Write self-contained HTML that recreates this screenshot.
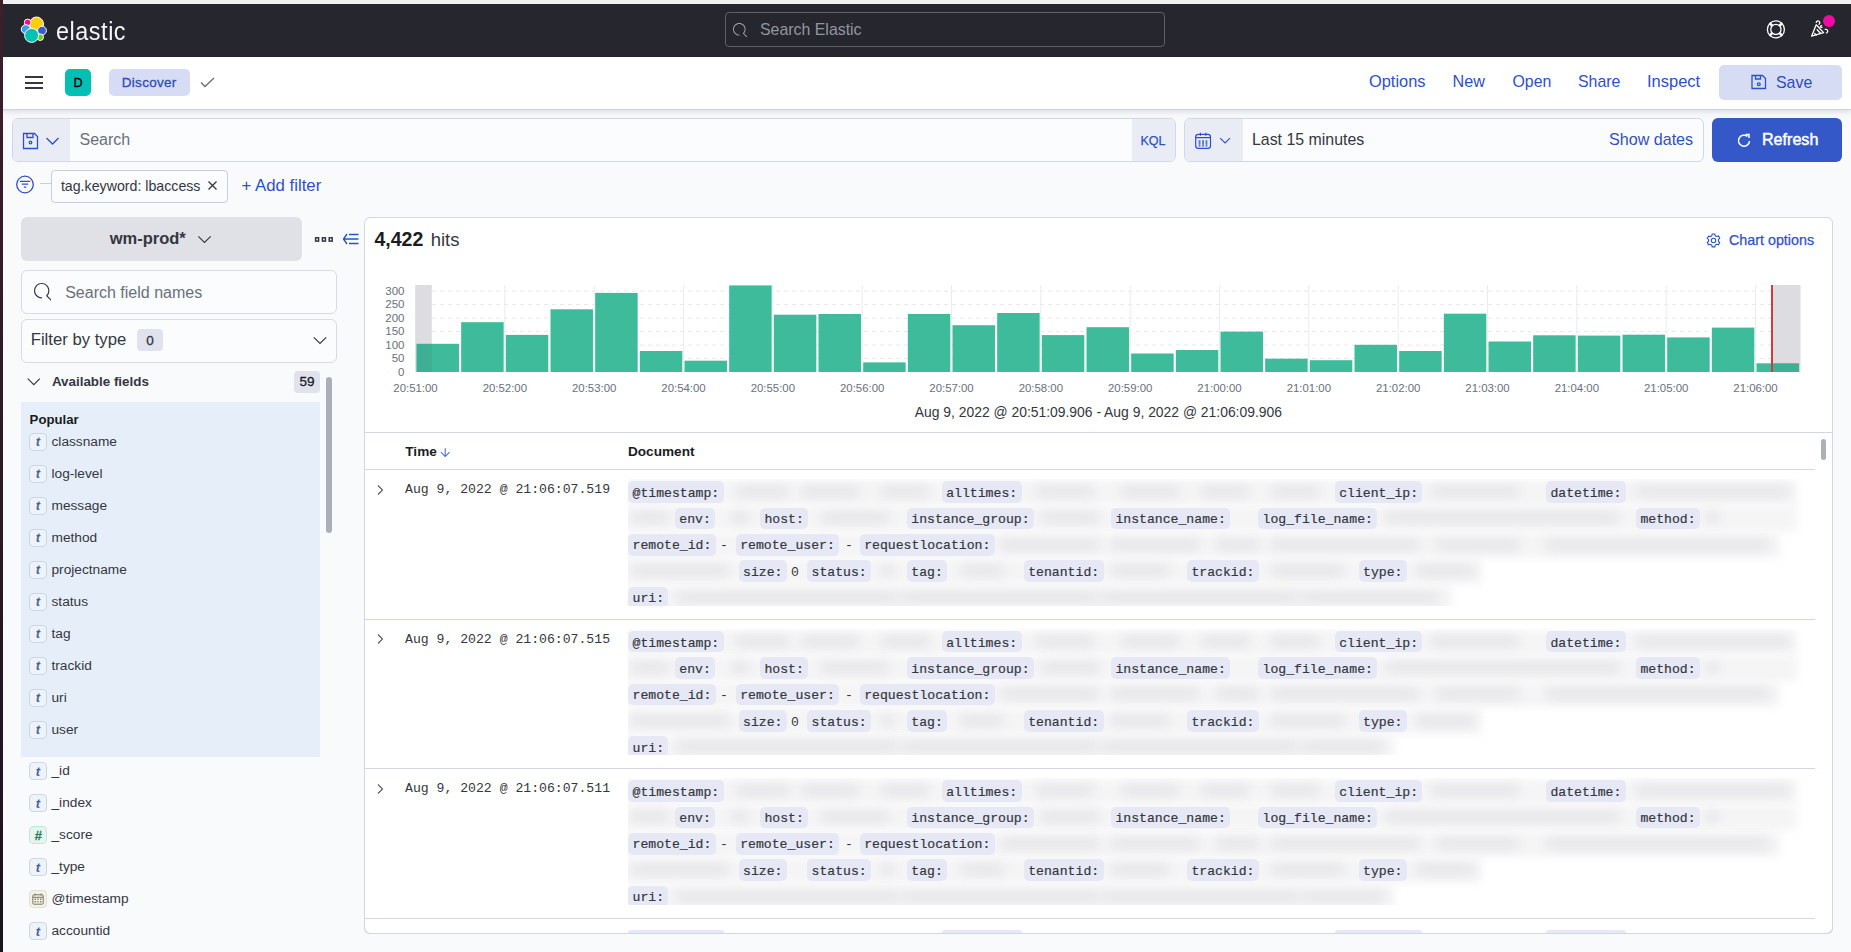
<!DOCTYPE html>
<html><head><meta charset="utf-8">
<style>
*{box-sizing:border-box;margin:0;padding:0}
html,body{width:1851px;height:952px;overflow:hidden}
body{position:relative;background:#f9fafc;font-family:"Liberation Sans",sans-serif;color:#343741}
.a{position:absolute}
.t{position:absolute;white-space:nowrap;line-height:1}
svg{display:block}
</style></head><body>
<div class="a" style="left:0;top:0;width:1851px;height:4px;background:#f1f1f2"></div>
<div class="a" style="left:0;top:0;width:3px;height:952px;background:linear-gradient(#3e1f2b,#1b1320);z-index:50"></div>
<div class="a" style="left:3px;top:4px;width:1848px;height:53px;background:#25262e"></div>
<svg class="a" style="left:18px;top:14px" width="32" height="32" viewBox="18 14 32 32">
  <g stroke="#fff" stroke-width="1">
  <circle cx="36.5" cy="24" r="7" fill="#fcd000"/>
  <circle cx="27.6" cy="22.4" r="3.3" fill="#ee0e8c"/>
  <circle cx="25.8" cy="29.2" r="4.5" fill="#3a9df0"/>
  <circle cx="42" cy="30.6" r="4.4" fill="#3a5bd0"/>
  <circle cx="40.2" cy="37.2" r="3.3" fill="#67d200"/>
  <circle cx="31.6" cy="35.4" r="7" fill="#00c2b2"/>
  </g>
</svg>
<div class="t" style="left:56.40px;top:18px;font-size:26px;font-family:'Liberation Sans',sans-serif;color:#f4f4f6;letter-spacing:0.6px;transform:scaleX(0.9);transform-origin:0 0">elastic</div><div class="a" style="left:725px;top:12px;width:440px;height:35px;border:1px solid #5f6168;border-radius:4px;background:#25262e"></div>
<svg class="a" style="left:733px;top:22.5px" width="14.4" height="14.4" viewBox="0 0 16 16"><path d="M11.271 11.978l3.872 3.873a.502.502 0 00.708 0 .502.502 0 000-.708l-3.565-3.564c2.38-2.747 2.267-6.923-.342-9.532-2.73-2.73-7.17-2.73-9.898 0-2.728 2.729-2.728 7.17 0 9.9a6.955 6.955 0 004.949 2.05.5.5 0 000-1 5.96 5.96 0 01-4.242-1.757 6.01 6.01 0 010-8.486c2.337-2.34 6.143-2.34 8.484 0a6.01 6.01 0 010 8.486.5.5 0 00.034.738z" fill="#a2a5ad"/></svg>
<div class="t" style="left:760.00px;top:22px;font-size:15.9px;font-family:'Liberation Sans',sans-serif;color:#93969e;">Search Elastic</div><svg class="a" style="left:1750px;top:5px" width="100" height="50" viewBox="1750 5 100 50"><g fill="none" stroke="#fff"><circle cx="1775.9" cy="29.4" r="8.5" stroke-width="1.3"/><circle cx="1775.9" cy="29.4" r="5.1" stroke-width="1.3"/><path d="M1772.1 25.6l-2.6-2.6M1779.7 25.6l2.6-2.6M1772.1 33.2l-2.6 2.6M1779.7 33.2l2.6 2.6" stroke-width="2.6"/></g>
<g fill="none" stroke="#fff" stroke-width="1.3" stroke-linejoin="round" stroke-linecap="round"><path d="M1811.6 36.2L1816.2 24.8L1823.6 32.6Z"/><path d="M1817.2 29.8l3.2 3.4M1814.6 33.4l1.6 1.6"/><path d="M1816.2 22.4a1.8 1.8 0 1 1 2.8 1.8M1825.2 29.4a1.8 1.8 0 1 1 1.2 3.6"/><path d="M1821.6 25.6l-1.4 1.2 1.8.6"/></g></svg>
<div class="a" style="left:1822.9px;top:14.8px;width:12px;height:12px;border-radius:50%;background:#f00ba6"></div>
<div class="a" style="left:3px;top:57px;width:1848px;height:53px;background:#fff;border-bottom:1px solid #cdd3df;box-shadow:0 2px 3px rgba(40,50,70,.08),0 4px 7px rgba(40,50,70,.05)"></div>
<div class="a" style="left:25px;top:76px;width:18px;height:2px;background:#343741"></div>
<div class="a" style="left:25px;top:82px;width:18px;height:2px;background:#343741"></div>
<div class="a" style="left:25px;top:87px;width:18px;height:2px;background:#343741"></div>
<div class="a" style="left:65px;top:69px;width:26px;height:27px;border-radius:5px;background:#00bfb3"></div>
<div class="a" style="left:109px;top:69px;width:81px;height:27px;border-radius:5px;background:#d6dcf3"></div>
<svg class="a" style="left:199px;top:76px" width="17" height="13" viewBox="0 0 17 13"><path d="M2 6.5l4 4 9-8.5" fill="none" stroke="#6a6e7a" stroke-width="1.3"/></svg>
<div class="t" style="left:65.00px;width:26px;text-align:center;top:77px;font-size:12.6px;font-family:'Liberation Sans',sans-serif;color:#000;-webkit-text-stroke:0.35px #000">D</div><div class="t" style="left:121.80px;top:76px;font-size:13.5px;font-family:'Liberation Sans',sans-serif;color:#2f4daf;letter-spacing:0.28px;-webkit-text-stroke:0.3px #2f4daf">Discover</div><div class="t" style="left:1369.00px;top:73px;font-size:16.4px;font-family:'Liberation Sans',sans-serif;color:#3050c6;">Options</div><div class="t" style="left:1452.60px;top:73px;font-size:16.2px;font-family:'Liberation Sans',sans-serif;color:#3050c6;">New</div><div class="t" style="left:1512.50px;top:74px;font-size:15.9px;font-family:'Liberation Sans',sans-serif;color:#3050c6;">Open</div><div class="t" style="left:1578.00px;top:74px;font-size:15.9px;font-family:'Liberation Sans',sans-serif;color:#3050c6;">Share</div><div class="t" style="left:1647.00px;top:73px;font-size:16.5px;font-family:'Liberation Sans',sans-serif;color:#3050c6;">Inspect</div><div class="a" style="left:1719px;top:65px;width:123px;height:35px;border-radius:5px;background:#d6dcf3"></div>
<svg class="a" style="left:1750px;top:73px" width="18" height="18" viewBox="0 0 18 18"><g fill="none" stroke="#3050c6" stroke-width="1.3"><path d="M2 2.5h10.5l3 3v10H2z"/><path d="M5.5 2.5v3.5h5v-3.5"/><circle cx="8.8" cy="11.3" r="1.4"/></g></svg>
<div class="t" style="left:1776.00px;top:75px;font-size:15.9px;font-family:'Liberation Sans',sans-serif;color:#2c4cb8;">Save</div><div class="a" style="left:12px;top:118px;width:1164px;height:44px;border:1px solid #d2d6e6;border-radius:6px;background:#fbfcfd;overflow:hidden">
  <div class="a" style="left:0;top:0;width:57px;height:42px;background:#e9ebf5"></div>
  <div class="a" style="left:1119px;top:0;width:44px;height:42px;background:#e9ebf5"></div>
</div>
<svg class="a" style="left:22px;top:132px" width="18" height="18" viewBox="0 0 18 18"><g fill="none" stroke="#3050c6" stroke-width="1.3"><path d="M1.5 1.5h11l3 3v12h-14z"/><path d="M5 1.5v4h6v-4"/><circle cx="8.5" cy="10.5" r="1.3"/></g></svg>
<svg class="a" style="left:45px;top:136px" width="15" height="10" viewBox="0 0 15 10"><path d="M1.5 2l6 6 6-6" fill="none" stroke="#3050c6" stroke-width="1.3"/></svg>
<div class="a" style="left:1184px;top:118px;width:520px;height:44px;border:1px solid #d2d6e6;border-radius:6px;background:#fbfcfd;overflow:hidden">
  <div class="a" style="left:0;top:0;width:58px;height:42px;background:#e9ebf5"></div>
</div>
<svg class="a" style="left:1186px;top:125px" width="54" height="30" viewBox="1186 125 54 30"><g fill="none" stroke="#3050c6" stroke-width="1.2"><rect x="1195.7" y="134.4" width="14.8" height="14" rx="2.6"/><path d="M1195.7 137.6h14.8M1200.4 132.8v3M1205.8 132.8v3"/><path d="M1220.2 138.2l4.9 4.8 4.9-4.8" stroke-width="1.15"/></g><g fill="#3050c6"><rect x="1198.6" y="140.2" width="1.9" height="4.6" opacity=".75"/><rect x="1202.1" y="140.2" width="1.9" height="4.6" opacity=".75"/><rect x="1205.5" y="140.2" width="1.9" height="4.6" opacity=".75"/><rect x="1198.6" y="145.3" width="1.9" height="1.2"/><rect x="1202.1" y="145.3" width="1.9" height="1.2"/><rect x="1205.5" y="145.3" width="1.9" height="1.2"/></g></svg>
<div class="a" style="left:1712px;top:118px;width:130px;height:44px;border-radius:6px;background:#3558c9"></div>
<svg class="a" style="left:1736px;top:132px" width="17" height="17" viewBox="0 0 17 17"><path d="M13.5 9a5.5 5.5 0 1 1-2-4.6" fill="none" stroke="#fff" stroke-width="1.5"/><path d="M9.5 2.5h3.5v3.6" fill="none" stroke="#fff" stroke-width="1.5"/></svg>
<div class="t" style="left:79.50px;top:132px;font-size:16px;font-family:'Liberation Sans',sans-serif;color:#69707d;">Search</div><div class="t" style="left:1140.40px;top:135px;font-size:12.5px;font-family:'Liberation Sans',sans-serif;color:#3050c6;-webkit-text-stroke:0.25px #3050c6">KQL</div><div class="t" style="left:1252.00px;top:132px;font-size:15.9px;font-family:'Liberation Sans',sans-serif;color:#343741;">Last 15 minutes</div><div class="t" style="left:1609.00px;top:131px;font-size:16.1px;font-family:'Liberation Sans',sans-serif;color:#3050c6;">Show dates</div><div class="t" style="left:1762.00px;top:131px;font-size:16.1px;font-family:'Liberation Sans',sans-serif;color:#fff;-webkit-text-stroke:0.45px #fff">Refresh</div><svg class="a" style="left:15px;top:175px" width="20" height="20" viewBox="0 0 20 20"><g fill="none" stroke="#3050c6" stroke-width="1.3"><circle cx="10" cy="9.5" r="8.3"/><path d="M4.8 6.3h10.4M6.8 9.2h6.4M8.8 12.1h2.4"/></g></svg>
<div class="a" style="left:40px;top:183px;width:11px;height:1px;background:#c9cde0"></div>
<div class="a" style="left:51px;top:170px;width:177px;height:33px;border:1px solid #c9cde0;border-radius:4px;background:#fbfcfd"></div>
<svg class="a" style="left:206px;top:179px" width="13" height="13" viewBox="0 0 13 13"><path d="M2.5 2.5l8 8M10.5 2.5l-8 8" stroke="#343741" stroke-width="1.3"/></svg>
<div class="t" style="left:60.90px;top:179px;font-size:14.2px;font-family:'Liberation Sans',sans-serif;color:#343741;">tag.keyword: lbaccess</div><div class="t" style="left:241.50px;top:178px;font-size:16.8px;font-family:'Liberation Sans',sans-serif;color:#3050c6;">+ Add filter</div>
<div class="a" style="left:21px;top:217px;width:281px;height:44px;border-radius:6px;background:#e0e1e6"></div>
<svg class="a" style="left:196px;top:233px" width="17" height="12" viewBox="0 0 17 12"><path d="M2.3 3.3l6.2 6.2 6.2-6.2" fill="none" stroke="#343741" stroke-width="1.15"/></svg>
<svg class="a" style="left:314px;top:236px" width="20" height="7" viewBox="0 0 20 7"><g fill="none" stroke="#343741" stroke-width="1.5"><rect x="1.6" y="1.8" width="3" height="3.3"/><rect x="8.4" y="1.8" width="3" height="3.3"/><rect x="15.2" y="1.8" width="3" height="3.3"/></g></svg>
<svg class="a" style="left:342px;top:232px" width="17" height="14" viewBox="0 0 17 14"><g fill="none" stroke="#3050c6" stroke-width="1.4"><path d="M5 2L1.5 7 5 12M1.5 7h15M7 2.5h9.5M7 11.5h9.5"/></g></svg>
<div class="a" style="left:21px;top:270px;width:316px;height:44px;border:1px solid #d8d9ec;border-radius:6px;background:#fbfcfd"></div>
<svg class="a" style="left:33.8px;top:283px" width="17.6" height="17.6" viewBox="0 0 16 16"><path d="M11.271 11.978l3.872 3.873a.502.502 0 00.708 0 .502.502 0 000-.708l-3.565-3.564c2.38-2.747 2.267-6.923-.342-9.532-2.73-2.73-7.17-2.73-9.898 0-2.728 2.729-2.728 7.17 0 9.9a6.955 6.955 0 004.949 2.05.5.5 0 000-1 5.96 5.96 0 01-4.242-1.757 6.01 6.01 0 010-8.486c2.337-2.34 6.143-2.34 8.484 0a6.01 6.01 0 010 8.486.5.5 0 00.034.738z" fill="#343741"/></svg>
<div class="a" style="left:21px;top:319px;width:316px;height:44px;border:1px solid #d8d9ec;border-radius:6px;background:#fbfcfd"></div>
<div class="a" style="left:137px;top:329px;width:26px;height:22px;border-radius:4px;background:#e0e2ec"></div>
<svg class="a" style="left:312px;top:335px" width="16" height="11" viewBox="0 0 16 11"><path d="M1.8 2.3l6.2 6.2 6.2-6.2" fill="none" stroke="#343741" stroke-width="1.15"/></svg>
<svg class="a" style="left:26px;top:376px" width="16" height="11" viewBox="0 0 16 11"><path d="M1.8 2.6l6 6 6-6" fill="none" stroke="#343741" stroke-width="1.15"/></svg>
<div class="a" style="left:294px;top:371px;width:26px;height:22px;border-radius:4px;background:#e0e2ec"></div>
<div class="a" style="left:326px;top:377px;width:6px;height:156px;border-radius:3px;background:#abafb8"></div>
<div class="a" style="left:21px;top:402px;width:299px;height:355px;background:#e6eff9"></div>
<div class="t" style="left:109.70px;top:230px;font-size:16.5px;font-family:'Liberation Sans',sans-serif;color:#343741;font-weight:bold;">wm-prod*</div><div class="t" style="left:65.20px;top:285px;font-size:16px;font-family:'Liberation Sans',sans-serif;color:#69707d;">Search field names</div><div class="t" style="left:30.70px;top:332px;font-size:16.7px;font-family:'Liberation Sans',sans-serif;color:#343741;">Filter by type</div><div class="t" style="left:137.00px;width:26px;text-align:center;top:334px;font-size:13.5px;font-family:'Liberation Sans',sans-serif;color:#343741;-webkit-text-stroke:0.3px #343741">0</div><div class="t" style="left:51.90px;top:375px;font-size:13.4px;font-family:'Liberation Sans',sans-serif;color:#343741;font-weight:bold;">Available fields</div><div class="t" style="left:294.00px;width:26px;text-align:center;top:375px;font-size:13.5px;font-family:'Liberation Sans',sans-serif;color:#1a1c21;-webkit-text-stroke:0.3px #1a1c21">59</div><div class="t" style="left:29.60px;top:413px;font-size:13.2px;font-family:'Liberation Sans',sans-serif;color:#1a1c21;font-weight:bold;">Popular</div><div class="a" style="left:29px;top:433px;width:18px;height:18px;border:1px solid #cdd6e8;border-radius:4px;background:#eef3fa"></div><div class="t" style="left:29.00px;width:18px;text-align:center;top:435px;font-size:13px;font-family:'Liberation Sans',sans-serif;color:#44659b;font-weight:bold;font-style:italic">t</div><div class="t" style="left:51.50px;top:435px;font-size:13.7px;font-family:'Liberation Sans',sans-serif;color:#343741;">classname</div>
<div class="a" style="left:29px;top:465px;width:18px;height:18px;border:1px solid #cdd6e8;border-radius:4px;background:#eef3fa"></div><div class="t" style="left:29.00px;width:18px;text-align:center;top:467px;font-size:13px;font-family:'Liberation Sans',sans-serif;color:#44659b;font-weight:bold;font-style:italic">t</div><div class="t" style="left:51.50px;top:467px;font-size:13.7px;font-family:'Liberation Sans',sans-serif;color:#343741;">log-level</div>
<div class="a" style="left:29px;top:497px;width:18px;height:18px;border:1px solid #cdd6e8;border-radius:4px;background:#eef3fa"></div><div class="t" style="left:29.00px;width:18px;text-align:center;top:499px;font-size:13px;font-family:'Liberation Sans',sans-serif;color:#44659b;font-weight:bold;font-style:italic">t</div><div class="t" style="left:51.50px;top:499px;font-size:13.7px;font-family:'Liberation Sans',sans-serif;color:#343741;">message</div>
<div class="a" style="left:29px;top:529px;width:18px;height:18px;border:1px solid #cdd6e8;border-radius:4px;background:#eef3fa"></div><div class="t" style="left:29.00px;width:18px;text-align:center;top:531px;font-size:13px;font-family:'Liberation Sans',sans-serif;color:#44659b;font-weight:bold;font-style:italic">t</div><div class="t" style="left:51.50px;top:531px;font-size:13.7px;font-family:'Liberation Sans',sans-serif;color:#343741;">method</div>
<div class="a" style="left:29px;top:561px;width:18px;height:18px;border:1px solid #cdd6e8;border-radius:4px;background:#eef3fa"></div><div class="t" style="left:29.00px;width:18px;text-align:center;top:563px;font-size:13px;font-family:'Liberation Sans',sans-serif;color:#44659b;font-weight:bold;font-style:italic">t</div><div class="t" style="left:51.50px;top:563px;font-size:13.7px;font-family:'Liberation Sans',sans-serif;color:#343741;">projectname</div>
<div class="a" style="left:29px;top:593px;width:18px;height:18px;border:1px solid #cdd6e8;border-radius:4px;background:#eef3fa"></div><div class="t" style="left:29.00px;width:18px;text-align:center;top:595px;font-size:13px;font-family:'Liberation Sans',sans-serif;color:#44659b;font-weight:bold;font-style:italic">t</div><div class="t" style="left:51.50px;top:595px;font-size:13.7px;font-family:'Liberation Sans',sans-serif;color:#343741;">status</div>
<div class="a" style="left:29px;top:625px;width:18px;height:18px;border:1px solid #cdd6e8;border-radius:4px;background:#eef3fa"></div><div class="t" style="left:29.00px;width:18px;text-align:center;top:627px;font-size:13px;font-family:'Liberation Sans',sans-serif;color:#44659b;font-weight:bold;font-style:italic">t</div><div class="t" style="left:51.50px;top:627px;font-size:13.7px;font-family:'Liberation Sans',sans-serif;color:#343741;">tag</div>
<div class="a" style="left:29px;top:657px;width:18px;height:18px;border:1px solid #cdd6e8;border-radius:4px;background:#eef3fa"></div><div class="t" style="left:29.00px;width:18px;text-align:center;top:659px;font-size:13px;font-family:'Liberation Sans',sans-serif;color:#44659b;font-weight:bold;font-style:italic">t</div><div class="t" style="left:51.50px;top:659px;font-size:13.7px;font-family:'Liberation Sans',sans-serif;color:#343741;">trackid</div>
<div class="a" style="left:29px;top:689px;width:18px;height:18px;border:1px solid #cdd6e8;border-radius:4px;background:#eef3fa"></div><div class="t" style="left:29.00px;width:18px;text-align:center;top:691px;font-size:13px;font-family:'Liberation Sans',sans-serif;color:#44659b;font-weight:bold;font-style:italic">t</div><div class="t" style="left:51.50px;top:691px;font-size:13.7px;font-family:'Liberation Sans',sans-serif;color:#343741;">uri</div>
<div class="a" style="left:29px;top:721px;width:18px;height:18px;border:1px solid #cdd6e8;border-radius:4px;background:#eef3fa"></div><div class="t" style="left:29.00px;width:18px;text-align:center;top:723px;font-size:13px;font-family:'Liberation Sans',sans-serif;color:#44659b;font-weight:bold;font-style:italic">t</div><div class="t" style="left:51.50px;top:723px;font-size:13.7px;font-family:'Liberation Sans',sans-serif;color:#343741;">user</div>
<div class="a" style="left:29px;top:762px;width:18px;height:18px;border:1px solid #cdd6e8;border-radius:4px;background:#eef3fa"></div><div class="t" style="left:29.00px;width:18px;text-align:center;top:765px;font-size:13px;font-family:'Liberation Sans',sans-serif;color:#44659b;font-weight:bold;font-style:italic">t</div><div class="t" style="left:51.50px;top:764px;font-size:13.7px;font-family:'Liberation Sans',sans-serif;color:#343741;">_id</div>
<div class="a" style="left:29px;top:794px;width:18px;height:18px;border:1px solid #cdd6e8;border-radius:4px;background:#eef3fa"></div><div class="t" style="left:29.00px;width:18px;text-align:center;top:797px;font-size:13px;font-family:'Liberation Sans',sans-serif;color:#44659b;font-weight:bold;font-style:italic">t</div><div class="t" style="left:51.50px;top:796px;font-size:13.7px;font-family:'Liberation Sans',sans-serif;color:#343741;">_index</div>
<div class="a" style="left:29px;top:826px;width:18px;height:18px;border:1px solid #c5e6d9;border-radius:4px;background:#e6f5ef"></div><div class="t" style="left:29.00px;width:18px;text-align:center;top:829px;font-size:13px;font-family:'Liberation Sans',sans-serif;color:#2f7d60;font-weight:bold;font-style:italic;-webkit-text-stroke:0.3px #2f7d60">#</div><div class="t" style="left:51.50px;top:828px;font-size:13.7px;font-family:'Liberation Sans',sans-serif;color:#343741;">_score</div>
<div class="a" style="left:29px;top:858px;width:18px;height:18px;border:1px solid #cdd6e8;border-radius:4px;background:#eef3fa"></div><div class="t" style="left:29.00px;width:18px;text-align:center;top:861px;font-size:13px;font-family:'Liberation Sans',sans-serif;color:#44659b;font-weight:bold;font-style:italic">t</div><div class="t" style="left:51.50px;top:860px;font-size:13.7px;font-family:'Liberation Sans',sans-serif;color:#343741;">_type</div>
<div class="a" style="left:29px;top:890px;width:18px;height:18px;border:1px solid #e3e0cf;border-radius:4px;background:#f3f1e8"></div><svg class="a" style="left:32px;top:893px" width="12" height="12" viewBox="0 0 12 12"><g fill="none" stroke="#7d7a66" stroke-width="1"><rect x="0.8" y="1.8" width="10.4" height="9.4" rx="1"/><path d="M0.8 4.3h10.4M3 0.5v2M9 0.5v2"/></g><g fill="#7d7a66"><rect x="2.5" y="5.5" width="1.3" height="1.5"/><rect x="5.3" y="5.5" width="1.3" height="1.5"/><rect x="8.1" y="5.5" width="1.3" height="1.5"/><rect x="2.5" y="8" width="1.3" height="1.5"/><rect x="5.3" y="8" width="1.3" height="1.5"/><rect x="8.1" y="8" width="1.3" height="1.5"/></g></svg><div class="t" style="left:51.50px;top:892px;font-size:13.7px;font-family:'Liberation Sans',sans-serif;color:#343741;">@timestamp</div>
<div class="a" style="left:29px;top:922px;width:18px;height:18px;border:1px solid #cdd6e8;border-radius:4px;background:#eef3fa"></div><div class="t" style="left:29.00px;width:18px;text-align:center;top:925px;font-size:13px;font-family:'Liberation Sans',sans-serif;color:#44659b;font-weight:bold;font-style:italic">t</div><div class="t" style="left:51.50px;top:924px;font-size:13.7px;font-family:'Liberation Sans',sans-serif;color:#343741;">accountid</div>

<div class="a" style="left:364px;top:217px;width:1469px;height:717px;border:1px solid #d2d6e6;border-radius:6px;background:#fff"></div>
<svg class="a" style="left:1706px;top:233px" width="15" height="15" viewBox="0 0 15 15"><g fill="none" stroke="#3050c6" stroke-width="1.1"><path d="M6.2 1h2.6l.5 1.8 1.3.7 1.8-.5 1.3 2.2-1.3 1.4v1.6l1.3 1.4-1.3 2.2-1.8-.5-1.3.8-.5 1.8H6.2l-.5-1.8-1.3-.8-1.8.5-1.3-2.2 1.3-1.4V6.7L1.3 5.3l1.3-2.2 1.8.5 1.3-.7z"/><circle cx="7.5" cy="7.5" r="2.2"/></g></svg>
<div class="t" style="left:374.50px;top:230px;font-size:19.5px;font-family:'Liberation Sans',sans-serif;color:#1a1c21;font-weight:bold;">4,422</div><div class="t" style="left:430.70px;top:231px;font-size:18.5px;font-family:'Liberation Sans',sans-serif;color:#343741;">hits</div><div class="t" style="left:1729.00px;top:233px;font-size:14.3px;font-family:'Liberation Sans',sans-serif;color:#3050c6;-webkit-text-stroke:0.25px #3050c6">Chart options</div><svg class="a" style="left:0;top:0" width="1851" height="400" viewBox="0 0 1851 400">
<line x1="416" x2="1800" y1="291.1" y2="291.1" stroke="#e6e8ef" stroke-width="1" stroke-dasharray="4 4"/>
<line x1="416" x2="1800" y1="304.6" y2="304.6" stroke="#e6e8ef" stroke-width="1" stroke-dasharray="4 4"/>
<line x1="416" x2="1800" y1="318.1" y2="318.1" stroke="#e6e8ef" stroke-width="1" stroke-dasharray="4 4"/>
<line x1="416" x2="1800" y1="331.6" y2="331.6" stroke="#e6e8ef" stroke-width="1" stroke-dasharray="4 4"/>
<line x1="416" x2="1800" y1="345.0" y2="345.0" stroke="#e6e8ef" stroke-width="1" stroke-dasharray="4 4"/>
<line x1="416" x2="1800" y1="358.5" y2="358.5" stroke="#e6e8ef" stroke-width="1" stroke-dasharray="4 4"/>
<line x1="415.5" x2="415.5" y1="285.0" y2="372.0" stroke="#ebecf1" stroke-width="1"/>
<line x1="504.8" x2="504.8" y1="285.0" y2="372.0" stroke="#ebecf1" stroke-width="1"/>
<line x1="594.2" x2="594.2" y1="285.0" y2="372.0" stroke="#ebecf1" stroke-width="1"/>
<line x1="683.5" x2="683.5" y1="285.0" y2="372.0" stroke="#ebecf1" stroke-width="1"/>
<line x1="772.8" x2="772.8" y1="285.0" y2="372.0" stroke="#ebecf1" stroke-width="1"/>
<line x1="862.2" x2="862.2" y1="285.0" y2="372.0" stroke="#ebecf1" stroke-width="1"/>
<line x1="951.5" x2="951.5" y1="285.0" y2="372.0" stroke="#ebecf1" stroke-width="1"/>
<line x1="1040.8" x2="1040.8" y1="285.0" y2="372.0" stroke="#ebecf1" stroke-width="1"/>
<line x1="1130.2" x2="1130.2" y1="285.0" y2="372.0" stroke="#ebecf1" stroke-width="1"/>
<line x1="1219.5" x2="1219.5" y1="285.0" y2="372.0" stroke="#ebecf1" stroke-width="1"/>
<line x1="1308.8" x2="1308.8" y1="285.0" y2="372.0" stroke="#ebecf1" stroke-width="1"/>
<line x1="1398.2" x2="1398.2" y1="285.0" y2="372.0" stroke="#ebecf1" stroke-width="1"/>
<line x1="1487.5" x2="1487.5" y1="285.0" y2="372.0" stroke="#ebecf1" stroke-width="1"/>
<line x1="1576.8" x2="1576.8" y1="285.0" y2="372.0" stroke="#ebecf1" stroke-width="1"/>
<line x1="1666.2" x2="1666.2" y1="285.0" y2="372.0" stroke="#ebecf1" stroke-width="1"/>
<line x1="1755.5" x2="1755.5" y1="285.0" y2="372.0" stroke="#ebecf1" stroke-width="1"/>
<rect x="415.5" y="285.0" width="16.3" height="87.0" fill="#dcdce1"/>
<rect x="1772" y="285.0" width="28.5" height="87.0" fill="#dcdce1"/>
<rect x="416.50" y="343.8" width="42.47" height="28.2" fill="#3ebb9a"/>
<rect x="461.17" y="322.2" width="42.47" height="49.8" fill="#3ebb9a"/>
<rect x="505.83" y="334.9" width="42.47" height="37.1" fill="#3ebb9a"/>
<rect x="550.50" y="309.3" width="42.47" height="62.7" fill="#3ebb9a"/>
<rect x="595.17" y="292.9" width="42.47" height="79.1" fill="#3ebb9a"/>
<rect x="639.84" y="351" width="42.47" height="21.0" fill="#3ebb9a"/>
<rect x="684.50" y="360.7" width="42.47" height="11.3" fill="#3ebb9a"/>
<rect x="729.17" y="285.4" width="42.47" height="86.6" fill="#3ebb9a"/>
<rect x="773.84" y="314.7" width="42.47" height="57.3" fill="#3ebb9a"/>
<rect x="818.50" y="314" width="42.47" height="58.0" fill="#3ebb9a"/>
<rect x="863.17" y="362.4" width="42.47" height="9.6" fill="#3ebb9a"/>
<rect x="907.84" y="314" width="42.47" height="58.0" fill="#3ebb9a"/>
<rect x="952.50" y="325.2" width="42.47" height="46.8" fill="#3ebb9a"/>
<rect x="997.17" y="313" width="42.47" height="59.0" fill="#3ebb9a"/>
<rect x="1041.84" y="335.1" width="42.47" height="36.9" fill="#3ebb9a"/>
<rect x="1086.51" y="327.2" width="42.47" height="44.8" fill="#3ebb9a"/>
<rect x="1131.17" y="353.5" width="42.47" height="18.5" fill="#3ebb9a"/>
<rect x="1175.84" y="350" width="42.47" height="22.0" fill="#3ebb9a"/>
<rect x="1220.51" y="331.6" width="42.47" height="40.4" fill="#3ebb9a"/>
<rect x="1265.17" y="358.7" width="42.47" height="13.3" fill="#3ebb9a"/>
<rect x="1309.84" y="360.2" width="42.47" height="11.8" fill="#3ebb9a"/>
<rect x="1354.51" y="344.8" width="42.47" height="27.2" fill="#3ebb9a"/>
<rect x="1399.17" y="351" width="42.47" height="21.0" fill="#3ebb9a"/>
<rect x="1443.84" y="313.7" width="42.47" height="58.3" fill="#3ebb9a"/>
<rect x="1488.51" y="341.5" width="42.47" height="30.5" fill="#3ebb9a"/>
<rect x="1533.17" y="335.3" width="42.47" height="36.7" fill="#3ebb9a"/>
<rect x="1577.84" y="335.6" width="42.47" height="36.4" fill="#3ebb9a"/>
<rect x="1622.51" y="334.7" width="42.47" height="37.3" fill="#3ebb9a"/>
<rect x="1667.18" y="337.4" width="42.47" height="34.6" fill="#3ebb9a"/>
<rect x="1711.84" y="327.6" width="42.47" height="44.4" fill="#3ebb9a"/>
<rect x="1756.51" y="363.3" width="42.47" height="8.7" fill="#3ebb9a"/>
<rect x="416.5" y="343.8" width="15.3" height="28.2" fill="#3a3a4a" fill-opacity="0.09"/>
<rect x="1772" y="363.3" width="27.5" height="8.7" fill="#3a3a4a" fill-opacity="0.09"/>
<rect x="1771" y="285.0" width="2" height="87.0" fill="#d23b3b"/>
</svg><div class="t" style="left:359.50px;width:45px;text-align:right;top:286px;font-size:11.5px;font-family:'Liberation Sans',sans-serif;color:#69707d;">300</div><div class="t" style="left:359.50px;width:45px;text-align:right;top:299px;font-size:11.5px;font-family:'Liberation Sans',sans-serif;color:#69707d;">250</div><div class="t" style="left:359.50px;width:45px;text-align:right;top:313px;font-size:11.5px;font-family:'Liberation Sans',sans-serif;color:#69707d;">200</div><div class="t" style="left:359.50px;width:45px;text-align:right;top:326px;font-size:11.5px;font-family:'Liberation Sans',sans-serif;color:#69707d;">150</div><div class="t" style="left:359.50px;width:45px;text-align:right;top:340px;font-size:11.5px;font-family:'Liberation Sans',sans-serif;color:#69707d;">100</div><div class="t" style="left:359.50px;width:45px;text-align:right;top:353px;font-size:11.5px;font-family:'Liberation Sans',sans-serif;color:#69707d;">50</div><div class="t" style="left:359.50px;width:45px;text-align:right;top:367px;font-size:11.5px;font-family:'Liberation Sans',sans-serif;color:#69707d;">0</div><div class="t" style="left:375.50px;width:80px;text-align:center;top:383px;font-size:11.4px;font-family:'Liberation Sans',sans-serif;color:#69707d;">20:51:00</div><div class="t" style="left:464.83px;width:80px;text-align:center;top:383px;font-size:11.4px;font-family:'Liberation Sans',sans-serif;color:#69707d;">20:52:00</div><div class="t" style="left:554.17px;width:80px;text-align:center;top:383px;font-size:11.4px;font-family:'Liberation Sans',sans-serif;color:#69707d;">20:53:00</div><div class="t" style="left:643.50px;width:80px;text-align:center;top:383px;font-size:11.4px;font-family:'Liberation Sans',sans-serif;color:#69707d;">20:54:00</div><div class="t" style="left:732.83px;width:80px;text-align:center;top:383px;font-size:11.4px;font-family:'Liberation Sans',sans-serif;color:#69707d;">20:55:00</div><div class="t" style="left:822.16px;width:80px;text-align:center;top:383px;font-size:11.4px;font-family:'Liberation Sans',sans-serif;color:#69707d;">20:56:00</div><div class="t" style="left:911.50px;width:80px;text-align:center;top:383px;font-size:11.4px;font-family:'Liberation Sans',sans-serif;color:#69707d;">20:57:00</div><div class="t" style="left:1000.83px;width:80px;text-align:center;top:383px;font-size:11.4px;font-family:'Liberation Sans',sans-serif;color:#69707d;">20:58:00</div><div class="t" style="left:1090.16px;width:80px;text-align:center;top:383px;font-size:11.4px;font-family:'Liberation Sans',sans-serif;color:#69707d;">20:59:00</div><div class="t" style="left:1179.50px;width:80px;text-align:center;top:383px;font-size:11.4px;font-family:'Liberation Sans',sans-serif;color:#69707d;">21:00:00</div><div class="t" style="left:1268.83px;width:80px;text-align:center;top:383px;font-size:11.4px;font-family:'Liberation Sans',sans-serif;color:#69707d;">21:01:00</div><div class="t" style="left:1358.16px;width:80px;text-align:center;top:383px;font-size:11.4px;font-family:'Liberation Sans',sans-serif;color:#69707d;">21:02:00</div><div class="t" style="left:1447.50px;width:80px;text-align:center;top:383px;font-size:11.4px;font-family:'Liberation Sans',sans-serif;color:#69707d;">21:03:00</div><div class="t" style="left:1536.83px;width:80px;text-align:center;top:383px;font-size:11.4px;font-family:'Liberation Sans',sans-serif;color:#69707d;">21:04:00</div><div class="t" style="left:1626.16px;width:80px;text-align:center;top:383px;font-size:11.4px;font-family:'Liberation Sans',sans-serif;color:#69707d;">21:05:00</div><div class="t" style="left:1715.49px;width:80px;text-align:center;top:383px;font-size:11.4px;font-family:'Liberation Sans',sans-serif;color:#69707d;">21:06:00</div><div class="t" style="left:914.70px;top:406px;font-size:13.9px;font-family:'Liberation Sans',sans-serif;color:#343741;">Aug 9, 2022 @ 20:51:09.906 - Aug 9, 2022 @ 21:06:09.906</div><div class="a" style="left:365px;top:432px;width:1467px;height:1px;background:#d2d6e6"></div>
<div class="a" style="left:365px;top:469px;width:1450px;height:1px;background:#d2d6e6"></div>
<div class="t" style="left:405.30px;top:445px;font-size:13.6px;font-family:'Liberation Sans',sans-serif;color:#1a1c21;font-weight:bold;">Time</div>
<svg class="a" style="left:436px;top:444px" width="18" height="16" viewBox="436 444 18 16"><path d="M445.2 448.2v8.2M441 452.2l4.2 4.3 4.3-4.3" fill="none" stroke="#4a69cf" stroke-width="1.05"/></svg>
<div class="t" style="left:628.00px;top:445px;font-size:13.6px;font-family:'Liberation Sans',sans-serif;color:#1a1c21;font-weight:bold;">Document</div>
<div class="a" style="left:1821px;top:439px;width:5px;height:21px;border-radius:3px;background:#abafb8"></div>
<svg class="a" style="left:375px;top:484px" width="10" height="12" viewBox="0 0 10 12"><path d="M3 1.5l4.5 4.5L3 10.5" fill="none" stroke="#535966" stroke-width="1.1"/></svg>
<div class="t" style="left:405.00px;top:483px;font-size:13.15px;font-family:'Liberation Mono',monospace;color:#343741;">Aug 9, 2022 @ 21:06:07.519</div>
<div class="a" style="left:628px;top:479.0px;width:1186px;height:126.5px;overflow:hidden"><div class="a" style="left:-10px;top:1.0px;width:1179px;height:25px;background:#f5f5f6;filter:blur(4px)"></div><div class="a" style="left:-10px;top:27.4px;width:1179px;height:25px;background:#f5f5f6;filter:blur(4px)"></div><div class="a" style="left:-10px;top:53.8px;width:1162px;height:25px;background:#f5f5f6;filter:blur(4px)"></div><div class="a" style="left:-10px;top:80.19999999999999px;width:864px;height:25px;background:#f5f5f6;filter:blur(4px)"></div><div class="a" style="left:-10px;top:106.6px;width:834px;height:25px;background:#f5f5f6;filter:blur(4px)"></div><div class="a" style="left:107px;top:6.0px;width:55px;height:13px;background:#e8e8ea;border-radius:7px;filter:blur(5px)"></div><div class="a" style="left:172px;top:6.0px;width:60px;height:13px;background:#e8e8ea;border-radius:7px;filter:blur(5px)"></div><div class="a" style="left:252px;top:6.0px;width:50px;height:13px;background:#e8e8ea;border-radius:7px;filter:blur(5px)"></div><div class="a" style="left:407px;top:6.0px;width:60px;height:13px;background:#e8e8ea;border-radius:7px;filter:blur(5px)"></div><div class="a" style="left:492px;top:6.0px;width:60px;height:13px;background:#e8e8ea;border-radius:7px;filter:blur(5px)"></div><div class="a" style="left:572px;top:6.0px;width:50px;height:13px;background:#e8e8ea;border-radius:7px;filter:blur(5px)"></div><div class="a" style="left:642px;top:6.0px;width:50px;height:13px;background:#e8e8ea;border-radius:7px;filter:blur(5px)"></div><div class="a" style="left:802px;top:6.0px;width:90px;height:13px;background:#e8e8ea;border-radius:7px;filter:blur(5px)"></div><div class="a" style="left:1007px;top:6.0px;width:155px;height:13px;background:#e8e8ea;border-radius:7px;filter:blur(5px)"></div><div class="a" style="left:2px;top:32.4px;width:40px;height:13px;background:#e8e8ea;border-radius:7px;filter:blur(5px)"></div><div class="a" style="left:102px;top:32.4px;width:20px;height:13px;background:#e8e8ea;border-radius:7px;filter:blur(5px)"></div><div class="a" style="left:192px;top:32.4px;width:70px;height:13px;background:#e8e8ea;border-radius:7px;filter:blur(5px)"></div><div class="a" style="left:412px;top:32.4px;width:60px;height:13px;background:#e8e8ea;border-radius:7px;filter:blur(5px)"></div><div class="a" style="left:757px;top:32.4px;width:235px;height:13px;background:#e8e8ea;border-radius:7px;filter:blur(5px)"></div><div class="a" style="left:1077px;top:32.4px;width:15px;height:13px;background:#e8e8ea;border-radius:7px;filter:blur(5px)"></div><div class="a" style="left:372px;top:58.8px;width:100px;height:13px;background:#e8e8ea;border-radius:7px;filter:blur(5px)"></div><div class="a" style="left:482px;top:58.8px;width:90px;height:13px;background:#e8e8ea;border-radius:7px;filter:blur(5px)"></div><div class="a" style="left:587px;top:58.8px;width:45px;height:13px;background:#e8e8ea;border-radius:7px;filter:blur(5px)"></div><div class="a" style="left:642px;top:58.8px;width:150px;height:13px;background:#e8e8ea;border-radius:7px;filter:blur(5px)"></div><div class="a" style="left:807px;top:58.8px;width:85px;height:13px;background:#e8e8ea;border-radius:7px;filter:blur(5px)"></div><div class="a" style="left:917px;top:58.8px;width:225px;height:13px;background:#e8e8ea;border-radius:7px;filter:blur(5px)"></div><div class="a" style="left:2px;top:85.19999999999999px;width:100px;height:13px;background:#e8e8ea;border-radius:7px;filter:blur(5px)"></div><div class="a" style="left:252px;top:85.19999999999999px;width:15px;height:13px;background:#e8e8ea;border-radius:7px;filter:blur(5px)"></div><div class="a" style="left:332px;top:85.19999999999999px;width:45px;height:13px;background:#e8e8ea;border-radius:7px;filter:blur(5px)"></div><div class="a" style="left:482px;top:85.19999999999999px;width:60px;height:13px;background:#e8e8ea;border-radius:7px;filter:blur(5px)"></div><div class="a" style="left:642px;top:85.19999999999999px;width:75px;height:13px;background:#e8e8ea;border-radius:7px;filter:blur(5px)"></div><div class="a" style="left:787px;top:85.19999999999999px;width:60px;height:13px;background:#e8e8ea;border-radius:7px;filter:blur(5px)"></div><div class="a" style="left:47px;top:111.6px;width:225px;height:13px;background:#e8e8ea;border-radius:7px;filter:blur(5px)"></div><div class="a" style="left:272px;top:111.6px;width:200px;height:13px;background:#e8e8ea;border-radius:7px;filter:blur(5px)"></div><div class="a" style="left:472px;top:111.6px;width:200px;height:13px;background:#e8e8ea;border-radius:7px;filter:blur(5px)"></div><div class="a" style="left:672px;top:111.6px;width:140px;height:13px;background:#e8e8ea;border-radius:7px;filter:blur(5px)"></div><div class="a" style="left:0.3px;top:2.2px;width:95.3px;height:21.5px;border-radius:5px;background:#e6e9f5"></div><div class="t" style="left:4.50px;top:8px;font-size:13.15px;font-family:'Liberation Mono',monospace;color:#343741;-webkit-text-stroke:0.2px #343741">@timestamp:</div><div class="a" style="left:314.0px;top:2.2px;width:79.5px;height:21.5px;border-radius:5px;background:#e6e9f5"></div><div class="t" style="left:318.20px;top:8px;font-size:13.15px;font-family:'Liberation Mono',monospace;color:#343741;-webkit-text-stroke:0.2px #343741">alltimes:</div><div class="a" style="left:707.0px;top:2.2px;width:87.4px;height:21.5px;border-radius:5px;background:#e6e9f5"></div><div class="t" style="left:711.20px;top:8px;font-size:13.15px;font-family:'Liberation Mono',monospace;color:#343741;-webkit-text-stroke:0.2px #343741">client_ip:</div><div class="a" style="left:918.2px;top:2.2px;width:79.5px;height:21.5px;border-radius:5px;background:#e6e9f5"></div><div class="t" style="left:922.40px;top:8px;font-size:13.15px;font-family:'Liberation Mono',monospace;color:#343741;-webkit-text-stroke:0.2px #343741">datetime:</div><div class="a" style="left:47.1px;top:28.6px;width:40.1px;height:21.5px;border-radius:5px;background:#e6e9f5"></div><div class="t" style="left:51.30px;top:34px;font-size:13.15px;font-family:'Liberation Mono',monospace;color:#343741;-webkit-text-stroke:0.2px #343741">env:</div><div class="a" style="left:132.2px;top:28.6px;width:47.9px;height:21.5px;border-radius:5px;background:#e6e9f5"></div><div class="t" style="left:136.40px;top:34px;font-size:13.15px;font-family:'Liberation Mono',monospace;color:#343741;-webkit-text-stroke:0.2px #343741">host:</div><div class="a" style="left:279.1px;top:28.6px;width:126.8px;height:21.5px;border-radius:5px;background:#e6e9f5"></div><div class="t" style="left:283.30px;top:34px;font-size:13.15px;font-family:'Liberation Mono',monospace;color:#343741;-webkit-text-stroke:0.2px #343741">instance_group:</div><div class="a" style="left:483.2px;top:28.6px;width:119.0px;height:21.5px;border-radius:5px;background:#e6e9f5"></div><div class="t" style="left:487.40px;top:34px;font-size:13.15px;font-family:'Liberation Mono',monospace;color:#343741;-webkit-text-stroke:0.2px #343741">instance_name:</div><div class="a" style="left:630.3px;top:28.6px;width:119.0px;height:21.5px;border-radius:5px;background:#e6e9f5"></div><div class="t" style="left:634.50px;top:34px;font-size:13.15px;font-family:'Liberation Mono',monospace;color:#343741;-webkit-text-stroke:0.2px #343741">log_file_name:</div><div class="a" style="left:1008.2px;top:28.6px;width:63.7px;height:21.5px;border-radius:5px;background:#e6e9f5"></div><div class="t" style="left:1012.40px;top:34px;font-size:13.15px;font-family:'Liberation Mono',monospace;color:#343741;-webkit-text-stroke:0.2px #343741">method:</div><div class="a" style="left:0.3px;top:55.0px;width:87.4px;height:21.5px;border-radius:5px;background:#e6e9f5"></div><div class="t" style="left:4.50px;top:60px;font-size:13.15px;font-family:'Liberation Mono',monospace;color:#343741;-webkit-text-stroke:0.2px #343741">remote_id:</div><div class="a" style="left:108.0px;top:55.0px;width:103.2px;height:21.5px;border-radius:5px;background:#e6e9f5"></div><div class="t" style="left:112.20px;top:60px;font-size:13.15px;font-family:'Liberation Mono',monospace;color:#343741;-webkit-text-stroke:0.2px #343741">remote_user:</div><div class="a" style="left:232.0px;top:55.0px;width:134.7px;height:21.5px;border-radius:5px;background:#e6e9f5"></div><div class="t" style="left:236.20px;top:60px;font-size:13.15px;font-family:'Liberation Mono',monospace;color:#343741;-webkit-text-stroke:0.2px #343741">requestlocation:</div><div class="a" style="left:110.8px;top:81.4px;width:47.9px;height:21.5px;border-radius:5px;background:#e6e9f5"></div><div class="t" style="left:115.00px;top:87px;font-size:13.15px;font-family:'Liberation Mono',monospace;color:#343741;-webkit-text-stroke:0.2px #343741">size:</div><div class="a" style="left:179.3px;top:81.4px;width:63.7px;height:21.5px;border-radius:5px;background:#e6e9f5"></div><div class="t" style="left:183.50px;top:87px;font-size:13.15px;font-family:'Liberation Mono',monospace;color:#343741;-webkit-text-stroke:0.2px #343741">status:</div><div class="a" style="left:279.1px;top:81.4px;width:40.1px;height:21.5px;border-radius:5px;background:#e6e9f5"></div><div class="t" style="left:283.30px;top:87px;font-size:13.15px;font-family:'Liberation Mono',monospace;color:#343741;-webkit-text-stroke:0.2px #343741">tag:</div><div class="a" style="left:396.0px;top:81.4px;width:79.5px;height:21.5px;border-radius:5px;background:#e6e9f5"></div><div class="t" style="left:400.20px;top:87px;font-size:13.15px;font-family:'Liberation Mono',monospace;color:#343741;-webkit-text-stroke:0.2px #343741">tenantid:</div><div class="a" style="left:559.2px;top:81.4px;width:71.6px;height:21.5px;border-radius:5px;background:#e6e9f5"></div><div class="t" style="left:563.40px;top:87px;font-size:13.15px;font-family:'Liberation Mono',monospace;color:#343741;-webkit-text-stroke:0.2px #343741">trackid:</div><div class="a" style="left:730.8px;top:81.4px;width:47.9px;height:21.5px;border-radius:5px;background:#e6e9f5"></div><div class="t" style="left:735.00px;top:87px;font-size:13.15px;font-family:'Liberation Mono',monospace;color:#343741;-webkit-text-stroke:0.2px #343741">type:</div><div class="a" style="left:0.3px;top:107.8px;width:40.1px;height:21.5px;border-radius:5px;background:#e6e9f5"></div><div class="t" style="left:4.50px;top:113px;font-size:13.15px;font-family:'Liberation Mono',monospace;color:#343741;-webkit-text-stroke:0.2px #343741">uri:</div><div class="t" style="left:92.00px;top:60px;font-size:13.15px;font-family:'Liberation Mono',monospace;color:#343741;">-</div><div class="t" style="left:217.00px;top:60px;font-size:13.15px;font-family:'Liberation Mono',monospace;color:#343741;">-</div><div class="t" style="left:163.00px;top:87px;font-size:13.15px;font-family:'Liberation Mono',monospace;color:#343741;">0</div></div>
<div class="a" style="left:365px;top:619px;width:1450px;height:1px;background:#d2d6e6"></div>
<svg class="a" style="left:375px;top:633px" width="10" height="12" viewBox="0 0 10 12"><path d="M3 1.5l4.5 4.5L3 10.5" fill="none" stroke="#535966" stroke-width="1.1"/></svg>
<div class="t" style="left:405.00px;top:633px;font-size:13.15px;font-family:'Liberation Mono',monospace;color:#343741;">Aug 9, 2022 @ 21:06:07.515</div>
<div class="a" style="left:628px;top:628.7px;width:1186px;height:126.5px;overflow:hidden"><div class="a" style="left:-10px;top:1.0px;width:1179px;height:25px;background:#f5f5f6;filter:blur(4px)"></div><div class="a" style="left:-10px;top:27.4px;width:1179px;height:25px;background:#f5f5f6;filter:blur(4px)"></div><div class="a" style="left:-10px;top:53.8px;width:1162px;height:25px;background:#f5f5f6;filter:blur(4px)"></div><div class="a" style="left:-10px;top:80.19999999999999px;width:864px;height:25px;background:#f5f5f6;filter:blur(4px)"></div><div class="a" style="left:-10px;top:106.6px;width:777px;height:25px;background:#f5f5f6;filter:blur(4px)"></div><div class="a" style="left:107px;top:6.0px;width:55px;height:13px;background:#e8e8ea;border-radius:7px;filter:blur(5px)"></div><div class="a" style="left:172px;top:6.0px;width:60px;height:13px;background:#e8e8ea;border-radius:7px;filter:blur(5px)"></div><div class="a" style="left:252px;top:6.0px;width:50px;height:13px;background:#e8e8ea;border-radius:7px;filter:blur(5px)"></div><div class="a" style="left:407px;top:6.0px;width:60px;height:13px;background:#e8e8ea;border-radius:7px;filter:blur(5px)"></div><div class="a" style="left:492px;top:6.0px;width:60px;height:13px;background:#e8e8ea;border-radius:7px;filter:blur(5px)"></div><div class="a" style="left:572px;top:6.0px;width:50px;height:13px;background:#e8e8ea;border-radius:7px;filter:blur(5px)"></div><div class="a" style="left:642px;top:6.0px;width:50px;height:13px;background:#e8e8ea;border-radius:7px;filter:blur(5px)"></div><div class="a" style="left:802px;top:6.0px;width:90px;height:13px;background:#e8e8ea;border-radius:7px;filter:blur(5px)"></div><div class="a" style="left:1007px;top:6.0px;width:155px;height:13px;background:#e8e8ea;border-radius:7px;filter:blur(5px)"></div><div class="a" style="left:2px;top:32.4px;width:40px;height:13px;background:#e8e8ea;border-radius:7px;filter:blur(5px)"></div><div class="a" style="left:102px;top:32.4px;width:20px;height:13px;background:#e8e8ea;border-radius:7px;filter:blur(5px)"></div><div class="a" style="left:192px;top:32.4px;width:70px;height:13px;background:#e8e8ea;border-radius:7px;filter:blur(5px)"></div><div class="a" style="left:412px;top:32.4px;width:60px;height:13px;background:#e8e8ea;border-radius:7px;filter:blur(5px)"></div><div class="a" style="left:757px;top:32.4px;width:235px;height:13px;background:#e8e8ea;border-radius:7px;filter:blur(5px)"></div><div class="a" style="left:1077px;top:32.4px;width:15px;height:13px;background:#e8e8ea;border-radius:7px;filter:blur(5px)"></div><div class="a" style="left:372px;top:58.8px;width:100px;height:13px;background:#e8e8ea;border-radius:7px;filter:blur(5px)"></div><div class="a" style="left:482px;top:58.8px;width:90px;height:13px;background:#e8e8ea;border-radius:7px;filter:blur(5px)"></div><div class="a" style="left:587px;top:58.8px;width:45px;height:13px;background:#e8e8ea;border-radius:7px;filter:blur(5px)"></div><div class="a" style="left:642px;top:58.8px;width:150px;height:13px;background:#e8e8ea;border-radius:7px;filter:blur(5px)"></div><div class="a" style="left:807px;top:58.8px;width:85px;height:13px;background:#e8e8ea;border-radius:7px;filter:blur(5px)"></div><div class="a" style="left:917px;top:58.8px;width:225px;height:13px;background:#e8e8ea;border-radius:7px;filter:blur(5px)"></div><div class="a" style="left:2px;top:85.19999999999999px;width:100px;height:13px;background:#e8e8ea;border-radius:7px;filter:blur(5px)"></div><div class="a" style="left:252px;top:85.19999999999999px;width:15px;height:13px;background:#e8e8ea;border-radius:7px;filter:blur(5px)"></div><div class="a" style="left:332px;top:85.19999999999999px;width:45px;height:13px;background:#e8e8ea;border-radius:7px;filter:blur(5px)"></div><div class="a" style="left:482px;top:85.19999999999999px;width:60px;height:13px;background:#e8e8ea;border-radius:7px;filter:blur(5px)"></div><div class="a" style="left:642px;top:85.19999999999999px;width:75px;height:13px;background:#e8e8ea;border-radius:7px;filter:blur(5px)"></div><div class="a" style="left:787px;top:85.19999999999999px;width:60px;height:13px;background:#e8e8ea;border-radius:7px;filter:blur(5px)"></div><div class="a" style="left:47px;top:111.6px;width:225px;height:13px;background:#e8e8ea;border-radius:7px;filter:blur(5px)"></div><div class="a" style="left:272px;top:111.6px;width:200px;height:13px;background:#e8e8ea;border-radius:7px;filter:blur(5px)"></div><div class="a" style="left:472px;top:111.6px;width:200px;height:13px;background:#e8e8ea;border-radius:7px;filter:blur(5px)"></div><div class="a" style="left:672px;top:111.6px;width:85px;height:13px;background:#e8e8ea;border-radius:7px;filter:blur(5px)"></div><div class="a" style="left:0.3px;top:2.2px;width:95.3px;height:21.5px;border-radius:5px;background:#e6e9f5"></div><div class="t" style="left:4.50px;top:8px;font-size:13.15px;font-family:'Liberation Mono',monospace;color:#343741;-webkit-text-stroke:0.2px #343741">@timestamp:</div><div class="a" style="left:314.0px;top:2.2px;width:79.5px;height:21.5px;border-radius:5px;background:#e6e9f5"></div><div class="t" style="left:318.20px;top:8px;font-size:13.15px;font-family:'Liberation Mono',monospace;color:#343741;-webkit-text-stroke:0.2px #343741">alltimes:</div><div class="a" style="left:707.0px;top:2.2px;width:87.4px;height:21.5px;border-radius:5px;background:#e6e9f5"></div><div class="t" style="left:711.20px;top:8px;font-size:13.15px;font-family:'Liberation Mono',monospace;color:#343741;-webkit-text-stroke:0.2px #343741">client_ip:</div><div class="a" style="left:918.2px;top:2.2px;width:79.5px;height:21.5px;border-radius:5px;background:#e6e9f5"></div><div class="t" style="left:922.40px;top:8px;font-size:13.15px;font-family:'Liberation Mono',monospace;color:#343741;-webkit-text-stroke:0.2px #343741">datetime:</div><div class="a" style="left:47.1px;top:28.6px;width:40.1px;height:21.5px;border-radius:5px;background:#e6e9f5"></div><div class="t" style="left:51.30px;top:34px;font-size:13.15px;font-family:'Liberation Mono',monospace;color:#343741;-webkit-text-stroke:0.2px #343741">env:</div><div class="a" style="left:132.2px;top:28.6px;width:47.9px;height:21.5px;border-radius:5px;background:#e6e9f5"></div><div class="t" style="left:136.40px;top:34px;font-size:13.15px;font-family:'Liberation Mono',monospace;color:#343741;-webkit-text-stroke:0.2px #343741">host:</div><div class="a" style="left:279.1px;top:28.6px;width:126.8px;height:21.5px;border-radius:5px;background:#e6e9f5"></div><div class="t" style="left:283.30px;top:34px;font-size:13.15px;font-family:'Liberation Mono',monospace;color:#343741;-webkit-text-stroke:0.2px #343741">instance_group:</div><div class="a" style="left:483.2px;top:28.6px;width:119.0px;height:21.5px;border-radius:5px;background:#e6e9f5"></div><div class="t" style="left:487.40px;top:34px;font-size:13.15px;font-family:'Liberation Mono',monospace;color:#343741;-webkit-text-stroke:0.2px #343741">instance_name:</div><div class="a" style="left:630.3px;top:28.6px;width:119.0px;height:21.5px;border-radius:5px;background:#e6e9f5"></div><div class="t" style="left:634.50px;top:34px;font-size:13.15px;font-family:'Liberation Mono',monospace;color:#343741;-webkit-text-stroke:0.2px #343741">log_file_name:</div><div class="a" style="left:1008.2px;top:28.6px;width:63.7px;height:21.5px;border-radius:5px;background:#e6e9f5"></div><div class="t" style="left:1012.40px;top:34px;font-size:13.15px;font-family:'Liberation Mono',monospace;color:#343741;-webkit-text-stroke:0.2px #343741">method:</div><div class="a" style="left:0.3px;top:55.0px;width:87.4px;height:21.5px;border-radius:5px;background:#e6e9f5"></div><div class="t" style="left:4.50px;top:60px;font-size:13.15px;font-family:'Liberation Mono',monospace;color:#343741;-webkit-text-stroke:0.2px #343741">remote_id:</div><div class="a" style="left:108.0px;top:55.0px;width:103.2px;height:21.5px;border-radius:5px;background:#e6e9f5"></div><div class="t" style="left:112.20px;top:60px;font-size:13.15px;font-family:'Liberation Mono',monospace;color:#343741;-webkit-text-stroke:0.2px #343741">remote_user:</div><div class="a" style="left:232.0px;top:55.0px;width:134.7px;height:21.5px;border-radius:5px;background:#e6e9f5"></div><div class="t" style="left:236.20px;top:60px;font-size:13.15px;font-family:'Liberation Mono',monospace;color:#343741;-webkit-text-stroke:0.2px #343741">requestlocation:</div><div class="a" style="left:110.8px;top:81.4px;width:47.9px;height:21.5px;border-radius:5px;background:#e6e9f5"></div><div class="t" style="left:115.00px;top:87px;font-size:13.15px;font-family:'Liberation Mono',monospace;color:#343741;-webkit-text-stroke:0.2px #343741">size:</div><div class="a" style="left:179.3px;top:81.4px;width:63.7px;height:21.5px;border-radius:5px;background:#e6e9f5"></div><div class="t" style="left:183.50px;top:87px;font-size:13.15px;font-family:'Liberation Mono',monospace;color:#343741;-webkit-text-stroke:0.2px #343741">status:</div><div class="a" style="left:279.1px;top:81.4px;width:40.1px;height:21.5px;border-radius:5px;background:#e6e9f5"></div><div class="t" style="left:283.30px;top:87px;font-size:13.15px;font-family:'Liberation Mono',monospace;color:#343741;-webkit-text-stroke:0.2px #343741">tag:</div><div class="a" style="left:396.0px;top:81.4px;width:79.5px;height:21.5px;border-radius:5px;background:#e6e9f5"></div><div class="t" style="left:400.20px;top:87px;font-size:13.15px;font-family:'Liberation Mono',monospace;color:#343741;-webkit-text-stroke:0.2px #343741">tenantid:</div><div class="a" style="left:559.2px;top:81.4px;width:71.6px;height:21.5px;border-radius:5px;background:#e6e9f5"></div><div class="t" style="left:563.40px;top:87px;font-size:13.15px;font-family:'Liberation Mono',monospace;color:#343741;-webkit-text-stroke:0.2px #343741">trackid:</div><div class="a" style="left:730.8px;top:81.4px;width:47.9px;height:21.5px;border-radius:5px;background:#e6e9f5"></div><div class="t" style="left:735.00px;top:87px;font-size:13.15px;font-family:'Liberation Mono',monospace;color:#343741;-webkit-text-stroke:0.2px #343741">type:</div><div class="a" style="left:0.3px;top:107.8px;width:40.1px;height:21.5px;border-radius:5px;background:#e6e9f5"></div><div class="t" style="left:4.50px;top:113px;font-size:13.15px;font-family:'Liberation Mono',monospace;color:#343741;-webkit-text-stroke:0.2px #343741">uri:</div><div class="t" style="left:92.00px;top:60px;font-size:13.15px;font-family:'Liberation Mono',monospace;color:#343741;">-</div><div class="t" style="left:217.00px;top:60px;font-size:13.15px;font-family:'Liberation Mono',monospace;color:#343741;">-</div><div class="t" style="left:163.00px;top:87px;font-size:13.15px;font-family:'Liberation Mono',monospace;color:#343741;">0</div></div>
<div class="a" style="left:365px;top:768px;width:1450px;height:1px;background:#d2d6e6"></div>
<svg class="a" style="left:375px;top:783px" width="10" height="12" viewBox="0 0 10 12"><path d="M3 1.5l4.5 4.5L3 10.5" fill="none" stroke="#535966" stroke-width="1.1"/></svg>
<div class="t" style="left:405.00px;top:782px;font-size:13.15px;font-family:'Liberation Mono',monospace;color:#343741;">Aug 9, 2022 @ 21:06:07.511</div>
<div class="a" style="left:628px;top:778.1px;width:1186px;height:126.5px;overflow:hidden"><div class="a" style="left:-10px;top:1.0px;width:1179px;height:25px;background:#f5f5f6;filter:blur(4px)"></div><div class="a" style="left:-10px;top:27.4px;width:1179px;height:25px;background:#f5f5f6;filter:blur(4px)"></div><div class="a" style="left:-10px;top:53.8px;width:1162px;height:25px;background:#f5f5f6;filter:blur(4px)"></div><div class="a" style="left:-10px;top:80.19999999999999px;width:864px;height:25px;background:#f5f5f6;filter:blur(4px)"></div><div class="a" style="left:-10px;top:106.6px;width:777px;height:25px;background:#f5f5f6;filter:blur(4px)"></div><div class="a" style="left:107px;top:6.0px;width:55px;height:13px;background:#e8e8ea;border-radius:7px;filter:blur(5px)"></div><div class="a" style="left:172px;top:6.0px;width:60px;height:13px;background:#e8e8ea;border-radius:7px;filter:blur(5px)"></div><div class="a" style="left:252px;top:6.0px;width:50px;height:13px;background:#e8e8ea;border-radius:7px;filter:blur(5px)"></div><div class="a" style="left:407px;top:6.0px;width:60px;height:13px;background:#e8e8ea;border-radius:7px;filter:blur(5px)"></div><div class="a" style="left:492px;top:6.0px;width:60px;height:13px;background:#e8e8ea;border-radius:7px;filter:blur(5px)"></div><div class="a" style="left:572px;top:6.0px;width:50px;height:13px;background:#e8e8ea;border-radius:7px;filter:blur(5px)"></div><div class="a" style="left:642px;top:6.0px;width:50px;height:13px;background:#e8e8ea;border-radius:7px;filter:blur(5px)"></div><div class="a" style="left:802px;top:6.0px;width:90px;height:13px;background:#e8e8ea;border-radius:7px;filter:blur(5px)"></div><div class="a" style="left:1007px;top:6.0px;width:155px;height:13px;background:#e8e8ea;border-radius:7px;filter:blur(5px)"></div><div class="a" style="left:2px;top:32.4px;width:40px;height:13px;background:#e8e8ea;border-radius:7px;filter:blur(5px)"></div><div class="a" style="left:102px;top:32.4px;width:20px;height:13px;background:#e8e8ea;border-radius:7px;filter:blur(5px)"></div><div class="a" style="left:192px;top:32.4px;width:70px;height:13px;background:#e8e8ea;border-radius:7px;filter:blur(5px)"></div><div class="a" style="left:412px;top:32.4px;width:60px;height:13px;background:#e8e8ea;border-radius:7px;filter:blur(5px)"></div><div class="a" style="left:757px;top:32.4px;width:235px;height:13px;background:#e8e8ea;border-radius:7px;filter:blur(5px)"></div><div class="a" style="left:1077px;top:32.4px;width:15px;height:13px;background:#e8e8ea;border-radius:7px;filter:blur(5px)"></div><div class="a" style="left:372px;top:58.8px;width:100px;height:13px;background:#e8e8ea;border-radius:7px;filter:blur(5px)"></div><div class="a" style="left:482px;top:58.8px;width:90px;height:13px;background:#e8e8ea;border-radius:7px;filter:blur(5px)"></div><div class="a" style="left:587px;top:58.8px;width:45px;height:13px;background:#e8e8ea;border-radius:7px;filter:blur(5px)"></div><div class="a" style="left:642px;top:58.8px;width:150px;height:13px;background:#e8e8ea;border-radius:7px;filter:blur(5px)"></div><div class="a" style="left:807px;top:58.8px;width:85px;height:13px;background:#e8e8ea;border-radius:7px;filter:blur(5px)"></div><div class="a" style="left:917px;top:58.8px;width:225px;height:13px;background:#e8e8ea;border-radius:7px;filter:blur(5px)"></div><div class="a" style="left:2px;top:85.19999999999999px;width:100px;height:13px;background:#e8e8ea;border-radius:7px;filter:blur(5px)"></div><div class="a" style="left:252px;top:85.19999999999999px;width:15px;height:13px;background:#e8e8ea;border-radius:7px;filter:blur(5px)"></div><div class="a" style="left:332px;top:85.19999999999999px;width:45px;height:13px;background:#e8e8ea;border-radius:7px;filter:blur(5px)"></div><div class="a" style="left:482px;top:85.19999999999999px;width:60px;height:13px;background:#e8e8ea;border-radius:7px;filter:blur(5px)"></div><div class="a" style="left:642px;top:85.19999999999999px;width:75px;height:13px;background:#e8e8ea;border-radius:7px;filter:blur(5px)"></div><div class="a" style="left:787px;top:85.19999999999999px;width:60px;height:13px;background:#e8e8ea;border-radius:7px;filter:blur(5px)"></div><div class="a" style="left:47px;top:111.6px;width:225px;height:13px;background:#e8e8ea;border-radius:7px;filter:blur(5px)"></div><div class="a" style="left:272px;top:111.6px;width:200px;height:13px;background:#e8e8ea;border-radius:7px;filter:blur(5px)"></div><div class="a" style="left:472px;top:111.6px;width:200px;height:13px;background:#e8e8ea;border-radius:7px;filter:blur(5px)"></div><div class="a" style="left:672px;top:111.6px;width:85px;height:13px;background:#e8e8ea;border-radius:7px;filter:blur(5px)"></div><div class="a" style="left:0.3px;top:2.2px;width:95.3px;height:21.5px;border-radius:5px;background:#e6e9f5"></div><div class="t" style="left:4.50px;top:8px;font-size:13.15px;font-family:'Liberation Mono',monospace;color:#343741;-webkit-text-stroke:0.2px #343741">@timestamp:</div><div class="a" style="left:314.0px;top:2.2px;width:79.5px;height:21.5px;border-radius:5px;background:#e6e9f5"></div><div class="t" style="left:318.20px;top:8px;font-size:13.15px;font-family:'Liberation Mono',monospace;color:#343741;-webkit-text-stroke:0.2px #343741">alltimes:</div><div class="a" style="left:707.0px;top:2.2px;width:87.4px;height:21.5px;border-radius:5px;background:#e6e9f5"></div><div class="t" style="left:711.20px;top:8px;font-size:13.15px;font-family:'Liberation Mono',monospace;color:#343741;-webkit-text-stroke:0.2px #343741">client_ip:</div><div class="a" style="left:918.2px;top:2.2px;width:79.5px;height:21.5px;border-radius:5px;background:#e6e9f5"></div><div class="t" style="left:922.40px;top:8px;font-size:13.15px;font-family:'Liberation Mono',monospace;color:#343741;-webkit-text-stroke:0.2px #343741">datetime:</div><div class="a" style="left:47.1px;top:28.6px;width:40.1px;height:21.5px;border-radius:5px;background:#e6e9f5"></div><div class="t" style="left:51.30px;top:34px;font-size:13.15px;font-family:'Liberation Mono',monospace;color:#343741;-webkit-text-stroke:0.2px #343741">env:</div><div class="a" style="left:132.2px;top:28.6px;width:47.9px;height:21.5px;border-radius:5px;background:#e6e9f5"></div><div class="t" style="left:136.40px;top:34px;font-size:13.15px;font-family:'Liberation Mono',monospace;color:#343741;-webkit-text-stroke:0.2px #343741">host:</div><div class="a" style="left:279.1px;top:28.6px;width:126.8px;height:21.5px;border-radius:5px;background:#e6e9f5"></div><div class="t" style="left:283.30px;top:34px;font-size:13.15px;font-family:'Liberation Mono',monospace;color:#343741;-webkit-text-stroke:0.2px #343741">instance_group:</div><div class="a" style="left:483.2px;top:28.6px;width:119.0px;height:21.5px;border-radius:5px;background:#e6e9f5"></div><div class="t" style="left:487.40px;top:34px;font-size:13.15px;font-family:'Liberation Mono',monospace;color:#343741;-webkit-text-stroke:0.2px #343741">instance_name:</div><div class="a" style="left:630.3px;top:28.6px;width:119.0px;height:21.5px;border-radius:5px;background:#e6e9f5"></div><div class="t" style="left:634.50px;top:34px;font-size:13.15px;font-family:'Liberation Mono',monospace;color:#343741;-webkit-text-stroke:0.2px #343741">log_file_name:</div><div class="a" style="left:1008.2px;top:28.6px;width:63.7px;height:21.5px;border-radius:5px;background:#e6e9f5"></div><div class="t" style="left:1012.40px;top:34px;font-size:13.15px;font-family:'Liberation Mono',monospace;color:#343741;-webkit-text-stroke:0.2px #343741">method:</div><div class="a" style="left:0.3px;top:55.0px;width:87.4px;height:21.5px;border-radius:5px;background:#e6e9f5"></div><div class="t" style="left:4.50px;top:60px;font-size:13.15px;font-family:'Liberation Mono',monospace;color:#343741;-webkit-text-stroke:0.2px #343741">remote_id:</div><div class="a" style="left:108.0px;top:55.0px;width:103.2px;height:21.5px;border-radius:5px;background:#e6e9f5"></div><div class="t" style="left:112.20px;top:60px;font-size:13.15px;font-family:'Liberation Mono',monospace;color:#343741;-webkit-text-stroke:0.2px #343741">remote_user:</div><div class="a" style="left:232.0px;top:55.0px;width:134.7px;height:21.5px;border-radius:5px;background:#e6e9f5"></div><div class="t" style="left:236.20px;top:60px;font-size:13.15px;font-family:'Liberation Mono',monospace;color:#343741;-webkit-text-stroke:0.2px #343741">requestlocation:</div><div class="a" style="left:110.8px;top:81.4px;width:47.9px;height:21.5px;border-radius:5px;background:#e6e9f5"></div><div class="t" style="left:115.00px;top:87px;font-size:13.15px;font-family:'Liberation Mono',monospace;color:#343741;-webkit-text-stroke:0.2px #343741">size:</div><div class="a" style="left:179.3px;top:81.4px;width:63.7px;height:21.5px;border-radius:5px;background:#e6e9f5"></div><div class="t" style="left:183.50px;top:87px;font-size:13.15px;font-family:'Liberation Mono',monospace;color:#343741;-webkit-text-stroke:0.2px #343741">status:</div><div class="a" style="left:279.1px;top:81.4px;width:40.1px;height:21.5px;border-radius:5px;background:#e6e9f5"></div><div class="t" style="left:283.30px;top:87px;font-size:13.15px;font-family:'Liberation Mono',monospace;color:#343741;-webkit-text-stroke:0.2px #343741">tag:</div><div class="a" style="left:396.0px;top:81.4px;width:79.5px;height:21.5px;border-radius:5px;background:#e6e9f5"></div><div class="t" style="left:400.20px;top:87px;font-size:13.15px;font-family:'Liberation Mono',monospace;color:#343741;-webkit-text-stroke:0.2px #343741">tenantid:</div><div class="a" style="left:559.2px;top:81.4px;width:71.6px;height:21.5px;border-radius:5px;background:#e6e9f5"></div><div class="t" style="left:563.40px;top:87px;font-size:13.15px;font-family:'Liberation Mono',monospace;color:#343741;-webkit-text-stroke:0.2px #343741">trackid:</div><div class="a" style="left:730.8px;top:81.4px;width:47.9px;height:21.5px;border-radius:5px;background:#e6e9f5"></div><div class="t" style="left:735.00px;top:87px;font-size:13.15px;font-family:'Liberation Mono',monospace;color:#343741;-webkit-text-stroke:0.2px #343741">type:</div><div class="a" style="left:0.3px;top:107.8px;width:40.1px;height:21.5px;border-radius:5px;background:#e6e9f5"></div><div class="t" style="left:4.50px;top:113px;font-size:13.15px;font-family:'Liberation Mono',monospace;color:#343741;-webkit-text-stroke:0.2px #343741">uri:</div><div class="t" style="left:92.00px;top:60px;font-size:13.15px;font-family:'Liberation Mono',monospace;color:#343741;">-</div><div class="t" style="left:217.00px;top:60px;font-size:13.15px;font-family:'Liberation Mono',monospace;color:#343741;">-</div></div>
<div class="a" style="left:365px;top:918px;width:1450px;height:1px;background:#d2d6e6"></div>
<div class="a" style="left:628.3px;top:929.7px;width:95.3px;height:3px;border-radius:5px 5px 0 0;background:#e6e9f5"></div>
<div class="a" style="left:942.0px;top:929.7px;width:79.5px;height:3px;border-radius:5px 5px 0 0;background:#e6e9f5"></div>
<div class="a" style="left:1335.0px;top:929.7px;width:87.4px;height:3px;border-radius:5px 5px 0 0;background:#e6e9f5"></div>
<div class="a" style="left:1546.2px;top:929.7px;width:79.5px;height:3px;border-radius:5px 5px 0 0;background:#e6e9f5"></div>
<div class="a" style="left:364px;top:934px;width:1487px;height:18px;background:#f9fafc"></div>
<div class="a" style="left:364px;top:921px;width:1469px;height:13px;border:1px solid #d2d6e6;border-top:none;border-radius:0 0 6px 6px"></div>
</body></html>
